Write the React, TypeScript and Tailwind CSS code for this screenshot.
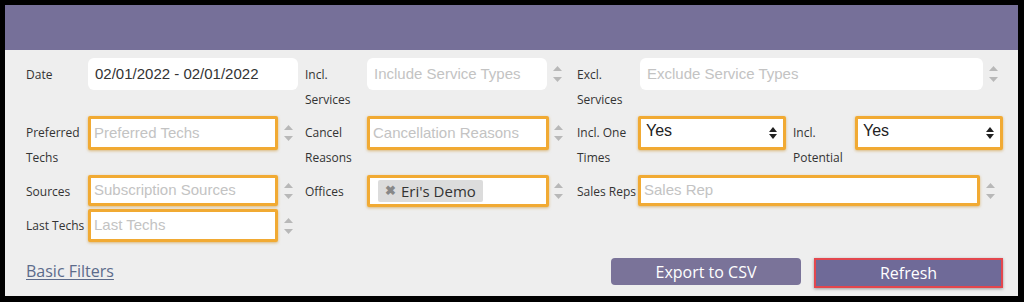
import React from 'react';

const labelFont = { fontFamily: '"Open Sans", "Noto Sans", sans-serif' };
const inputFont = { fontFamily: '"Liberation Sans", Arial, sans-serif' };

function Label({ children, w = 'w-[62px]' }: { children: React.ReactNode; w?: string }) {
    return (
        <div className={`${w} shrink-0 pt-[4px] text-[12px] leading-[25px] text-[#333] whitespace-nowrap`} style={labelFont}>
            {children}
        </div>
    );
}

function Spinner({ w = 'w-[20px]' }: { w?: string }) {
    return (
        <div className={`${w} shrink-0 flex flex-col items-center justify-center gap-[6px] self-stretch`}>
            <svg width="9" height="5" viewBox="0 0 9 5"><path d="M4.5 0L9 5H0z" fill="#b8b8b8" /></svg>
            <svg width="9" height="5" viewBox="0 0 9 5"><path d="M0 0h9L4.5 5z" fill="#b8b8b8" /></svg>
        </div>
    );
}

function Box({ w, h, orange, children }: { w: string; h: string; orange?: boolean; children?: React.ReactNode }) {
    return (
        <div
            className={`${w} ${h} shrink-0 bg-white flex items-center text-[15px] ${orange ? 'border-[3px] border-[#f1aa33] shadow-[0_1px_3px_rgba(200,140,30,0.55)] pl-[3px] rounded-[2px]' : 'rounded-[6px] pl-[7px]'}`}
            style={inputFont}
        >
            {children}
        </div>
    );
}

const Placeholder = ({ text }: { text: string }) => <span className="text-[#c3c3c3]">{text}</span>;

function SelectBox({ w }: { w: string }) {
    return (
        <div className={`${w} h-[34px] shrink-0 bg-white border-[3px] border-[#f1aa33] shadow-[0_1px_3px_rgba(200,140,30,0.55)] rounded-[2px] flex items-center justify-between pl-[5px] pr-[6px] pb-[4px] text-[16px] text-[#222]`} style={inputFont}>
            <span>Yes</span>
            <svg width="8" height="12" viewBox="0 0 8 12" className="mt-[3px]">
                <path d="M4 0L8 5H0z" fill="#222" />
                <path d="M0 7h8L4 12z" fill="#222" />
            </svg>
        </div>
    );
}

export default function App() {
    return (
        <div className="w-[1024px] h-[302px] bg-black pl-[5px] pt-[5px] pr-[6px] pb-[6px]">
            <div className="h-full flex flex-col bg-[#eeeeee]">
                <div className="h-[45px] shrink-0 bg-[#767099]" />

                <div className="pl-[21px] pt-[8px]">
                    {/* row 1 */}
                    <div className="flex items-start h-[58px]">
                        <Label>Date</Label>
                        <Box w="w-[210px]" h="h-[32px]">
                            <span className="text-[#333]">02/01/2022 - 02/01/2022</span>
                        </Box>
                        <div className="w-[7px] shrink-0" />
                        <Label>Incl.<br />Services</Label>
                        <div className="flex h-[32px]">
                            <Box w="w-[180px]" h="h-[32px]"><Placeholder text="Include Service Types" /></Box>
                            <Spinner />
                        </div>
                        <div className="w-[10px] shrink-0" />
                        <Label w="w-[63px]">Excl.<br />Services</Label>
                        <div className="flex h-[32px]">
                            <Box w="w-[343px]" h="h-[32px]"><Placeholder text="Exclude Service Types" /></Box>
                            <Spinner />
                        </div>
                    </div>

                    {/* row 2 */}
                    <div className="flex items-start h-[59px]">
                        <Label>Preferred<br />Techs</Label>
                        <div className="flex h-[34px]">
                            <Box w="w-[190px]" h="h-[34px]" orange><Placeholder text="Preferred Techs" /></Box>
                            <Spinner />
                        </div>
                        <div className="w-[7px] shrink-0" />
                        <Label>Cancel<br />Reasons</Label>
                        <div className="flex h-[34px]">
                            <Box w="w-[182px]" h="h-[34px]" orange><Placeholder text="Cancellation Reasons" /></Box>
                            <Spinner w="w-[18px]" />
                        </div>
                        <div className="w-[10px] shrink-0" />
                        <Label w="w-[61px]">Incl. One<br />Times</Label>
                        <SelectBox w="w-[148px]" />
                        <div className="w-[7px] shrink-0" />
                        <Label>Incl.<br />Potential</Label>
                        <SelectBox w="w-[148px]" />
                    </div>

                    {/* row 3 */}
                    <div className="flex items-start h-[34px]">
                        <Label>Sources</Label>
                        <div className="flex h-[31px]">
                            <Box w="w-[190px]" h="h-[31px]" orange><Placeholder text="Subscription Sources" /></Box>
                            <Spinner />
                        </div>
                        <div className="w-[7px] shrink-0" />
                        <Label>Offices</Label>
                        <div className="flex h-[32px]">
                            <Box w="w-[182px]" h="h-[32px]" orange>
                                <span className="ml-[5px] h-[22px] px-[7px] bg-[#dcdcdc] flex items-center gap-[5px] text-[#333] rounded-[2px]">
                                    <span className="text-[#888] text-[13px] font-bold">✖</span>
                                    <span className="text-[15px]" style={labelFont}>Eri's Demo</span>
                                </span>
                            </Box>
                            <Spinner w="w-[18px]" />
                        </div>
                        <div className="w-[10px] shrink-0" />
                        <Label w="w-[61px]">Sales Reps</Label>
                        <div className="flex h-[31px]">
                            <Box w="w-[342px]" h="h-[31px]" orange><Placeholder text="Sales Rep" /></Box>
                            <Spinner />
                        </div>
                    </div>

                    {/* row 4 */}
                    <div className="flex items-start h-[33px]">
                        <Label>Last Techs</Label>
                        <div className="flex h-[33px]">
                            <Box w="w-[190px]" h="h-[33px]" orange><Placeholder text="Last Techs" /></Box>
                            <Spinner />
                        </div>
                    </div>
                </div>

                <div className="flex items-start pl-[21px] pr-[15px] mt-[16px]">
                    <a className="pt-[2px] text-[16px] leading-[22px] text-[#5c6b8b] underline underline-offset-2" style={labelFont}>Basic Filters</a>
                    <button className="ml-auto w-[190px] h-[27px] rounded-[4px] bg-[#7a7399] text-white text-[16px]" style={labelFont}>
                        Export to CSV
                    </button>
                    <button className="ml-[13px] w-[189px] h-[30px] border-2 border-[#e3474e] bg-[#6f6a98] text-white text-[16px] shadow-[0_1px_3px_rgba(0,0,0,0.35)]" style={labelFont}>
                        Refresh
                    </button>
                </div>
            </div>
        </div>
    );
}
